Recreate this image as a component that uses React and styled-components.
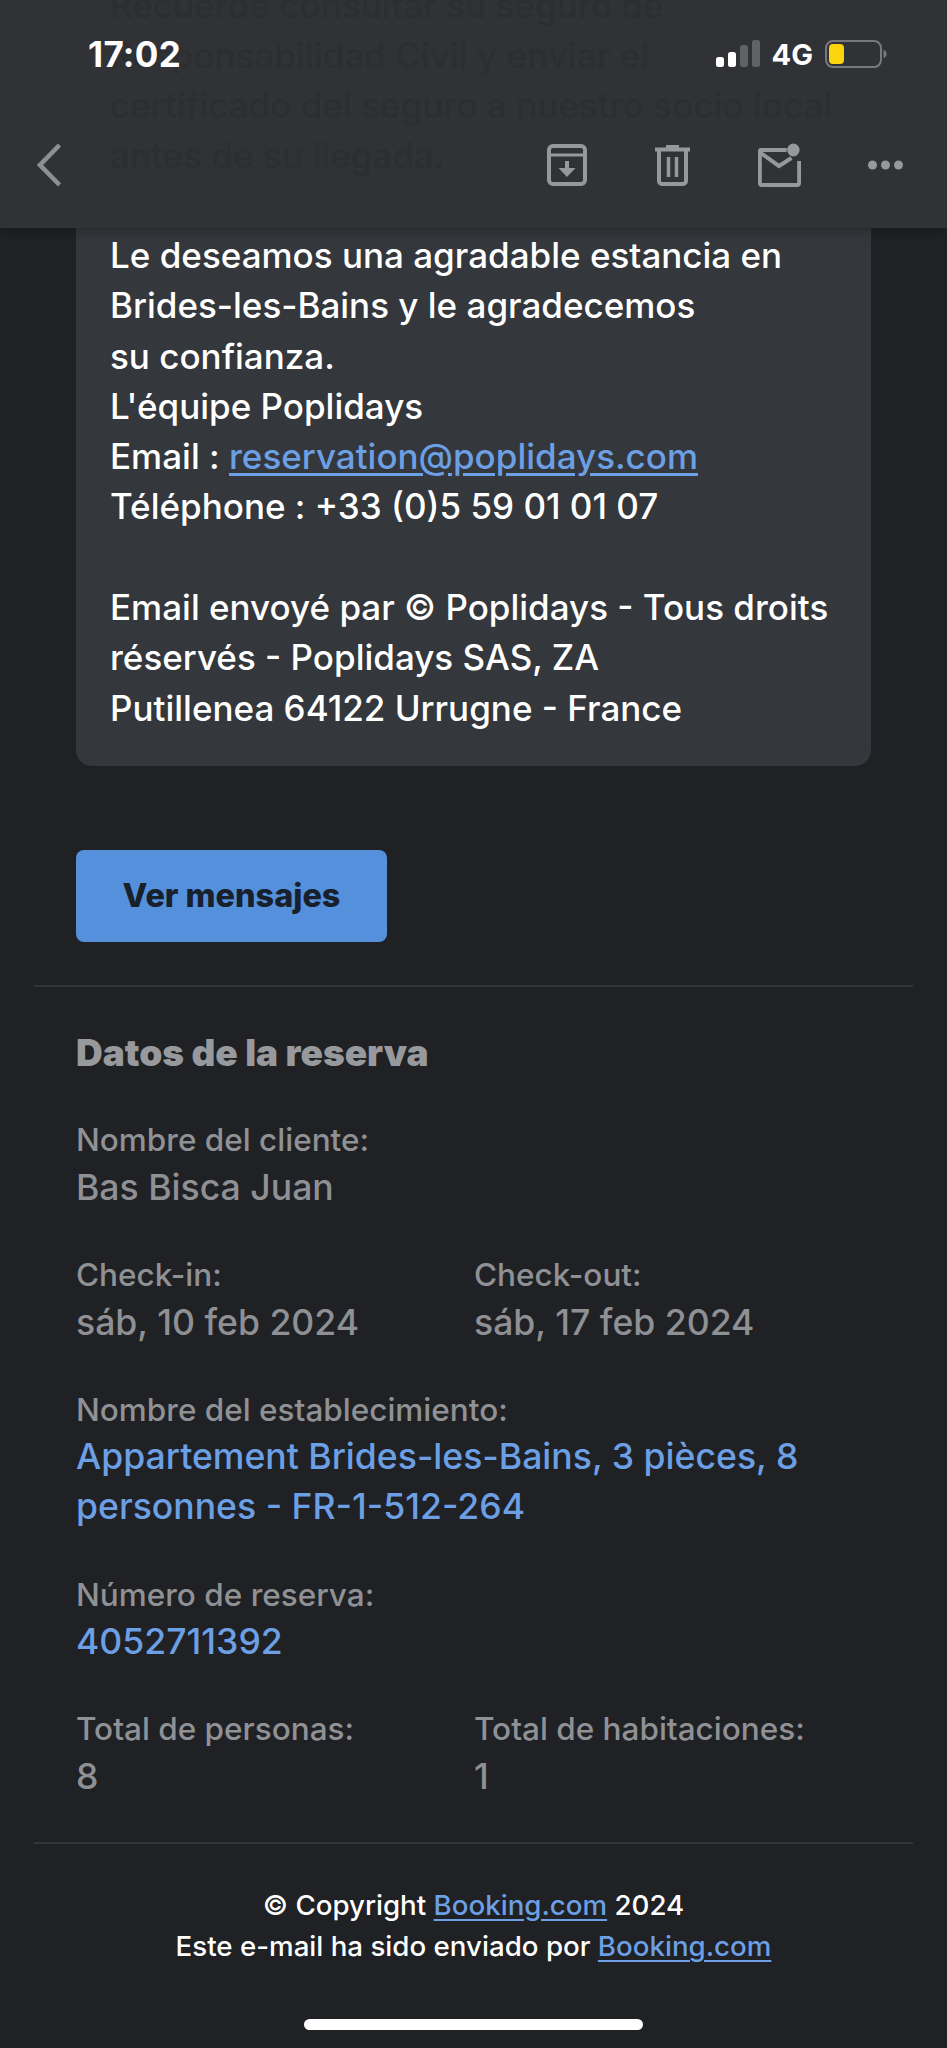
import React from "react";
import styled, { createGlobalStyle } from "styled-components";

const GlobalStyle = createGlobalStyle`
  html, body {
    margin: 0;
    padding: 0;
    background: #1f2125;
  }
  body {
    font-family: Inter, "Liberation Sans", sans-serif;
    -webkit-font-smoothing: antialiased;
  }
`;

const Screen = styled.div`
  width: 947px;
  height: 2048px;
  overflow: hidden;
  position: relative;
  background: #1f2125;
`;

const Header = styled.header`
  position: relative;
  height: 228px;
  box-sizing: border-box;
  overflow: hidden;
  background: #303236;
  box-shadow: 0 2px 10px rgba(0, 0, 0, 0.3);
  z-index: 1;
`;

/* email text scrolling under the translucent bar */
const GhostText = styled.div`
  position: absolute;
  left: 110px;
  top: -20px;
  font-size: 35.1px;
  font-weight: 500;
  line-height: 50px;
  white-space: nowrap;
  color: #2c2e32;
  filter: blur(0.7px);
`;

const StatusBar = styled.div`
  position: relative;
  display: flex;
  align-items: center;
  height: 108px;
  padding: 0 60px 0 88px;
  box-sizing: border-box;
`;

const Time = styled.span`
  font-size: 35px;
  font-weight: 700;
  letter-spacing: 0.3px;
  color: #ffffff;
  margin-right: auto;
`;

const Network = styled.span`
  font-size: 29px;
  font-weight: 700;
  color: #ffffff;
  margin: 0 12px 0 12px;
`;

const Toolbar = styled.div`
  position: relative;
  display: flex;
  align-items: center;
  gap: 68px;
  padding: 35px 44px 0 37px;
`;

const BackIcon = styled.svg`
  margin-right: auto;
`;

const DotsSvg = styled.svg`
  margin-left: -1px;
`;

const Card = styled.section`
  margin: 0 76px;
  padding: 2px 0 33px 34px;
  background: #34373b;
  border-radius: 0 0 16px 16px;
  font-size: 35px;
  font-weight: 500;
  line-height: 50.3px;
  color: #ffffff;
  white-space: nowrap;
`;

const Link = styled.a`
  color: #6c9fe3;
  text-decoration: underline;
  text-underline-offset: 4px;
`;

const Button = styled.a`
  display: flex;
  align-items: center;
  justify-content: center;
  width: 311px;
  height: 92px;
  margin: 84px 0 0 76px;
  border-radius: 8px;
  background: #5590dc;
  color: #18202c;
  font-size: 32.4px;
  font-weight: 800;
`;

const Divider = styled.hr`
  height: 2px;
  border: none;
  background: #33353a;
  margin: ${(p) => p.$top}px 34px 0;
`;

const Details = styled.section`
  display: grid;
  grid-template-columns: 398px 1fr;
  row-gap: 38.2px;
  padding: 41px 0 0 76px;
`;

const Title = styled.h2`
  grid-column: 1 / -1;
  margin: 0;
  font-size: 37px;
  line-height: 50px;
  font-weight: 900;
  color: #98999d;
`;

const Field = styled.div`
  grid-column: ${(p) => (p.$wide ? "1 / -1" : "auto")};
`;

const Label = styled.div`
  font-size: 31.5px;
  font-weight: 500;
  line-height: 48.6px;
  margin-bottom: -2px;
  color: #909195;
`;

const Value = styled.div`
  font-size: 35.6px;
  font-weight: 500;
  line-height: 50px;
  color: ${(p) => (p.$link ? "#6c9fe3" : "#8f9094")};
`;

const Footer = styled.footer`
  margin-top: 41px;
  text-align: center;
  font-size: 27.7px;
  font-weight: 500;
  line-height: 41.5px;
  color: #ffffff;
`;

const HomeBar = styled.div`
  position: absolute;
  left: 304px;
  bottom: 18px;
  width: 339px;
  height: 11px;
  border-radius: 6px;
  background: #ffffff;
`;

const SignalIcon = () => (
  <svg width="44" height="28" viewBox="0 0 44 28">
    <rect x="0" y="17" width="8" height="10" rx="2.5" fill="#fff" />
    <rect x="12" y="12" width="8" height="15" rx="2.5" fill="#fff" />
    <rect x="24" y="5" width="8" height="22" rx="2.5" fill="#606266" />
    <rect x="36" y="0" width="8" height="27" rx="2.5" fill="#606266" />
  </svg>
);

const BatteryIcon = () => (
  <svg width="62" height="28" viewBox="0 0 62 28">
    <rect x="1" y="1" width="55" height="26" rx="7" fill="none" stroke="#77797d" strokeWidth="2" />
    <rect x="4" y="4" width="15" height="20" rx="4" fill="#fbd40c" />
    <path d="M58.5 10c2 .6 3 2 3 4s-1 3.4-3 4z" fill="#77797d" />
  </svg>
);

const ArchiveIcon = () => (
  <svg width="40" height="42" viewBox="0 0 40 42" fill="none" stroke="#96989c" strokeWidth="4">
    <rect x="2" y="2" width="36" height="38" rx="4" />
    <path d="M2 11h36" strokeWidth="3" />
    <path d="M20 17v11" strokeWidth="4" />
    <path d="M11.5 24h17L20 33z" fill="#96989c" stroke="none" />
  </svg>
);

const TrashIcon = () => (
  <svg width="35" height="42" viewBox="0 0 35 42" fill="none" stroke="#96989c" strokeWidth="4">
    <path d="M0 5.5h35" />
    <path d="M11 3h13" />
    <path d="M4 6v31a3 3 0 0 0 3 3h21a3 3 0 0 0 3-3V6" />
    <path d="M13.5 13v20M21.5 13v20" strokeWidth="3.5" />
  </svg>
);

const MailIcon = () => (
  <svg width="43" height="44" viewBox="0 0 45 44" preserveAspectRatio="none" fill="none" stroke="#96989c" strokeWidth="4">
    <path d="M30 7H3a1 1 0 0 0-1 1v32a2 2 0 0 0 2 2h37a2 2 0 0 0 2-2V18" />
    <path d="M3 10l19 13 13-8" />
    <circle cx="37" cy="7" r="6.5" fill="#96989c" stroke="none" />
  </svg>
);

const DotsIcon = () => (
  <DotsSvg width="35" height="42" viewBox="0 0 35 42" fill="#96989c">
    <circle cx="4.5" cy="21" r="4.5" />
    <circle cx="17.5" cy="21" r="4.5" />
    <circle cx="30.5" cy="21" r="4.5" />
  </DotsSvg>
);

const App = () => {
  return (
    <Screen>
      <GlobalStyle />
      <Header>
        <GhostText>
          Recuerde consultar su seguro de
          <br />
          Responsabilidad Civil y enviar el
          <br />
          certificado del seguro a nuestro socio local
          <br />
          antes de su llegada.
        </GhostText>
        <StatusBar>
          <Time>17:02</Time>
          <SignalIcon />
          <Network>4G</Network>
          <BatteryIcon />
        </StatusBar>
        <Toolbar>
          <BackIcon width="24" height="44" viewBox="0 0 24 44" fill="none" stroke="#8d8f93" strokeWidth="4.5">
            <path d="M22.5 2 3 22l19.5 20" />
          </BackIcon>
          <ArchiveIcon />
          <TrashIcon />
          <MailIcon />
          <DotsIcon />
        </Toolbar>
      </Header>

      <Card>
        Le deseamos una agradable estancia en
        <br />
        Brides-les-Bains y le agradecemos
        <br />
        su confianza.
        <br />
        L'équipe Poplidays
        <br />
        Email : <Link>reservation@poplidays.com</Link>
        <br />
        Téléphone : +33 (0)5 59 01 01 07
        <br />
        <br />
        Email envoyé par © Poplidays - Tous droits
        <br />
        réservés - Poplidays SAS, ZA
        <br />
        Putillenea 64122 Urrugne - France
      </Card>

      <Button>Ver mensajes</Button>
      <Divider $top={43} />

      <Details>
        <Title>Datos de la reserva</Title>
        <Field $wide>
          <Label>Nombre del cliente:</Label>
          <Value>Bas Bisca Juan</Value>
        </Field>
        <Field>
          <Label>Check-in:</Label>
          <Value>sáb, 10 feb 2024</Value>
        </Field>
        <Field>
          <Label>Check-out:</Label>
          <Value>sáb, 17 feb 2024</Value>
        </Field>
        <Field $wide>
          <Label>Nombre del establecimiento:</Label>
          <Value $link>
            Appartement Brides-les-Bains, 3 pièces, 8
            <br />
            personnes - FR-1-512-264
          </Value>
        </Field>
        <Field $wide>
          <Label>Número de reserva:</Label>
          <Value $link>4052711392</Value>
        </Field>
        <Field>
          <Label>Total de personas:</Label>
          <Value>8</Value>
        </Field>
        <Field>
          <Label>Total de habitaciones:</Label>
          <Value>1</Value>
        </Field>
      </Details>

      <Divider $top={40} />
      <Footer>
        © Copyright <Link>Booking.com</Link> 2024
        <br />
        Este e-mail ha sido enviado por <Link>Booking.com</Link>
      </Footer>
      <HomeBar />
    </Screen>
  );
};

export default App;
